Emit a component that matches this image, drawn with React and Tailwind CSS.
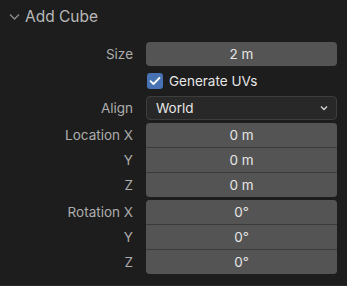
import React from 'react';

function Label({ children }) {
  return (
    <div className="w-[134px] shrink-0 pr-[1px] text-right text-[13.5px] text-[#adadad]">{children}</div>
  );
}

function NumField({ value, rounded }) {
  return (
    <div className={`flex h-[24px] items-center justify-center bg-[#545454] text-[13.5px] text-[#e6e6e6] ${rounded}`}>
      {value}
    </div>
  );
}

function VectorGroup({ title, values }) {
  const axes = ['X', 'Y', 'Z'];
  return (
    <div className="mt-[3px] flex">
      <div className="flex flex-col">
        {axes.map((a, i) => (
          <div key={a} className={`flex h-[24px] items-center ${i > 0 ? 'mt-[1px]' : ''}`}>
            <Label>{i === 0 ? `${title} ${a}` : a}</Label>
          </div>
        ))}
      </div>
      <div className="ml-[12px] flex w-[191px] flex-col overflow-hidden rounded-[4px] bg-[#3a3a3a] gap-[1px]">
        {values.map((v, i) => (
          <NumField key={i} value={v} rounded="" />
        ))}
      </div>
    </div>
  );
}

export default function App() {
  return (
    <div
      className="h-[286px] w-[347px] overflow-hidden border-b border-[#2b2b2b] bg-[#1d1d1d]"
      style={{ fontFamily: 'Inter, "Noto Sans", sans-serif' }}
    >
      {/* header */}
      <div className="flex h-[34px] items-center pl-[9px]">
        <svg width="11" height="8" viewBox="0 0 11 8" className="mr-[5px]">
          <path d="M1 1.5 L5.5 6 L10 1.5" fill="none" stroke="#8c8c8c" strokeWidth="1.3" />
        </svg>
        <span className="text-[15.5px] text-[#b9b9b9]">Add Cube</span>
      </div>

      <div className="flex flex-col pt-[8px]">
        {/* size */}
        <div className="flex h-[24px] items-center">
          <Label>Size</Label>
          <div className="ml-[12px] w-[191px]">
            <NumField value="2 m" rounded="rounded-[4px]" />
          </div>
        </div>

        {/* generate uvs */}
        <div className="mt-[6px] flex h-[18px] items-center pl-[147px]">
          <div className="flex h-[16px] w-[16px] items-center justify-center rounded-[3px] bg-[#4772b3]">
            <svg width="12" height="10" viewBox="0 0 12 10">
              <path d="M1.5 5.2 L4.5 8 L10.5 1.8" fill="none" stroke="#ffffff" strokeWidth="1.8" strokeLinecap="round" strokeLinejoin="round" />
            </svg>
          </div>
          <span className="ml-[6px] text-[13.5px] text-[#e6e6e6]">Generate UVs</span>
        </div>

        {/* align */}
        <div className="mt-[6px] flex h-[24px] items-center">
          <Label>Align</Label>
          <div className="ml-[12px] flex h-[24px] w-[191px] items-center justify-between rounded-[4px] border border-[#3d3d3d] bg-[#282828] pl-[9px] pr-[8px] text-[13.5px] text-[#e6e6e6]">
            <span>World</span>
            <svg width="8" height="6" viewBox="0 0 8 6">
              <path d="M1 1.5 L4 4.5 L7 1.5" fill="none" stroke="#d8d8d8" strokeWidth="1.3" />
            </svg>
          </div>
        </div>

        <VectorGroup title="Location" values={['0 m', '0 m', '0 m']} />
        <VectorGroup title="Rotation" values={['0°', '0°', '0°']} />
      </div>
    </div>
  );
}
